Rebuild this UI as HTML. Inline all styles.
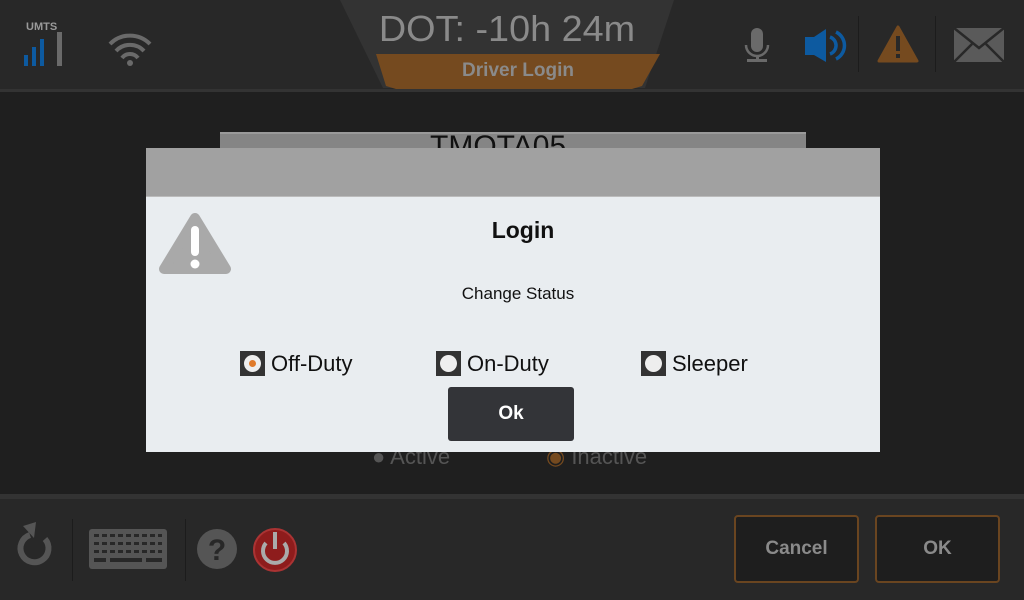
<!DOCTYPE html>
<html><head><meta charset="utf-8"><style>
*{margin:0;padding:0;box-sizing:border-box}
body{width:1024px;height:600px;background:#1f1f1f;font-family:"Liberation Sans",sans-serif;position:relative;overflow:hidden}
.abs{position:absolute}
</style></head><body>
<div class="abs" style="left:0;top:0;width:1024px;height:89px;background:#282828"></div>
<div class="abs" style="left:0;top:89px;width:1024px;height:3px;background:#333"></div>
<svg class="abs" style="left:0;top:0" width="1024" height="92">
<polygon points="340,0 674,0 645,88 383,88" fill="#333"/>
<polygon points="376,54 660,54 642,86 632,89 396,89 386,86" fill="#754a1f"/>
<text x="26" y="30" font-family="Liberation Sans" font-size="11" font-weight="bold" fill="#9a9a9a">UMTS</text>
<rect x="24" y="55" width="4" height="11" fill="#0d5aa0"/>
<rect x="32" y="47" width="4" height="19" fill="#0d5aa0"/>
<rect x="40" y="39" width="4" height="27" fill="#0d5aa0"/>
<rect x="57" y="32" width="5" height="34" fill="#6a6a6a"/>
<g fill="none" stroke="#6a6a6a" stroke-width="4"><path d="M110,44 A28,28 0 0 1 150,44"/><path d="M116,51 A19,19 0 0 1 144,51"/><path d="M122,58 A10,10 0 0 1 138,58"/></g>
<circle cx="130" cy="63" r="3" fill="#6a6a6a"/>
<rect x="751" y="28" width="12" height="24" rx="6" fill="#6a6a6a"/>
<path d="M746,45 a11,11 0 0 0 22,0" stroke="#6a6a6a" stroke-width="2.5" fill="none"/>
<rect x="756" y="55" width="3" height="5" fill="#6a6a6a"/><rect x="747" y="59" width="20" height="3" fill="#6a6a6a"/>
<polygon points="805,37 814,37 826,29 826,62 814,55 805,55" fill="#0d5aa0"/>
<g fill="none" stroke="#0d5aa0" stroke-width="3.5"><path d="M830,37 a9,9 0 0 1 0,17"/><path d="M836,32 a15,15 0 0 1 0,27"/></g>
<rect x="858" y="16" width="1" height="56" fill="#1c1c1c"/>
<rect x="935" y="16" width="1" height="56" fill="#1c1c1c"/>
<polygon points="898,27 917,61 879,61" fill="#754a1f" stroke="#754a1f" stroke-width="3" stroke-linejoin="round"/>
<rect x="896" y="36" width="4" height="15" fill="#282828"/><rect x="896" y="54" width="4" height="4" fill="#282828"/>
<rect x="954" y="28" width="50" height="34" fill="#5a5a5a"/>
<path d="M954,28 L979,48 L1004,28 M954,62 L972,44 M1004,62 L986,44" stroke="#282828" stroke-width="2.5" fill="none"/>
</svg>
<div class="abs" style="left:340px;top:8px;width:334px;text-align:center;font-size:36px;color:#8a8a8a;transform:scaleX(1.05)">DOT: -10h 24m</div>
<div class="abs" style="left:376px;top:60px;width:284px;text-align:center;font-size:19px;font-weight:bold;color:#8a8a8a">Driver Login</div>

<div class="abs" style="left:220px;top:132px;width:586px;height:20px;background:#858585;border-top:2px solid #9a9a9a"></div>
<div class="abs" style="left:430px;top:132px;font-size:30px;color:#111;line-height:30px;height:16px;overflow:hidden">TMOTA05</div>
<div class="abs" style="left:372px;top:444px;font-size:22px;color:#555">● Active</div>
<div class="abs" style="left:546px;top:444px;font-size:22px;color:#555"><span style="color:#754a1f">◉</span> Inactive</div>

<div class="abs" style="left:146px;top:148px;width:734px;height:48px;background:#a1a1a1"></div>
<div class="abs" style="left:146px;top:196px;width:734px;height:256px;background:#e9edf0;border-top:1px solid #bbb"></div>
<svg class="abs" style="left:158px;top:212px" width="74" height="64"><polygon points="37,6 68,57 6,57" fill="#a9a9a9" stroke="#a9a9a9" stroke-width="10" stroke-linejoin="round"/>
<rect x="33" y="14" width="8" height="30" rx="4" fill="#fff"/><circle cx="37" cy="52" r="4.5" fill="#fff"/></svg>
<div class="abs" style="left:146px;top:217px;width:754px;text-align:center;font-size:23px;font-weight:bold;color:#111">Login</div>
<div class="abs" style="left:146px;top:284px;width:744px;text-align:center;font-size:17px;color:#111">Change Status</div>
<div class="abs" style="left:240px;top:351px;width:25px;height:25px;background:#333"><div style="margin:4px;width:17px;height:17px;border-radius:50%;background:#eee;display:flex;align-items:center;justify-content:center"><div style="width:7px;height:7px;border-radius:50%;background:#e07a2a"></div></div></div>
<div class="abs" style="left:271px;top:351px;font-size:22px;color:#111">Off-Duty</div>
<div class="abs" style="left:436px;top:351px;width:25px;height:25px;background:#333"><div style="margin:4px;width:17px;height:17px;border-radius:50%;background:#eee"></div></div>
<div class="abs" style="left:467px;top:351px;font-size:22px;color:#111">On-Duty</div>
<div class="abs" style="left:641px;top:351px;width:25px;height:25px;background:#333"><div style="margin:4px;width:17px;height:17px;border-radius:50%;background:#eee"></div></div>
<div class="abs" style="left:672px;top:351px;font-size:22px;color:#111">Sleeper</div>
<div class="abs" style="left:448px;top:387px;width:126px;height:54px;background:#333438;border-radius:3px;color:#fff;font-weight:bold;font-size:19px;text-align:center;line-height:54px">Ok</div>

<div class="abs" style="left:0;top:494px;width:1024px;height:5px;background:#333"></div>
<div class="abs" style="left:0;top:499px;width:1024px;height:101px;background:#282828"></div>
<svg class="abs" style="left:0;top:499px" width="320" height="101">
<path d="M30,36 A14,14 0 1 0 45,40" fill="none" stroke="#555" stroke-width="6"/><polygon points="23,27 36,23 34,39" fill="#555"/>
<rect x="72" y="20" width="1" height="62" fill="#1c1c1c"/><rect x="185" y="20" width="1" height="62" fill="#1c1c1c"/>
<rect x="89" y="30" width="78" height="40" rx="3" fill="#555"/>
<g stroke="#282828" stroke-width="3" stroke-dasharray="5,3"><line x1="94" y1="36.5" x2="162" y2="36.5"/><line x1="94" y1="44.5" x2="162" y2="44.5"/><line x1="94" y1="52.5" x2="162" y2="52.5"/></g>
<rect x="94" y="59" width="12" height="4" fill="#282828"/><rect x="110" y="59" width="32" height="4" fill="#282828"/><rect x="146" y="59" width="16" height="4" fill="#282828"/>
<ellipse cx="217" cy="50" rx="20" ry="20" fill="#555"/>
<text x="217" y="61" text-anchor="middle" font-family="Liberation Sans" font-weight="bold" font-size="30" fill="#282828">?</text>
<circle cx="275" cy="51" r="21" fill="#8e1c1c" stroke="#a33" stroke-width="2"/>
<path d="M266,44 a12,12 0 1 0 18,0" fill="none" stroke="#aaa" stroke-width="4"/><rect x="273" y="33" width="4" height="17" fill="#aaa"/>
</svg>
<div class="abs" style="left:734px;top:515px;width:125px;height:68px;background:#1e1e1e;border:2px solid #6a4520;border-radius:4px;color:#8a8a8a;font-weight:bold;font-size:19px;text-align:center;line-height:64px">Cancel</div>
<div class="abs" style="left:875px;top:515px;width:125px;height:68px;background:#1e1e1e;border:2px solid #6a4520;border-radius:4px;color:#8a8a8a;font-weight:bold;font-size:19px;text-align:center;line-height:64px">OK</div>
</body></html>
